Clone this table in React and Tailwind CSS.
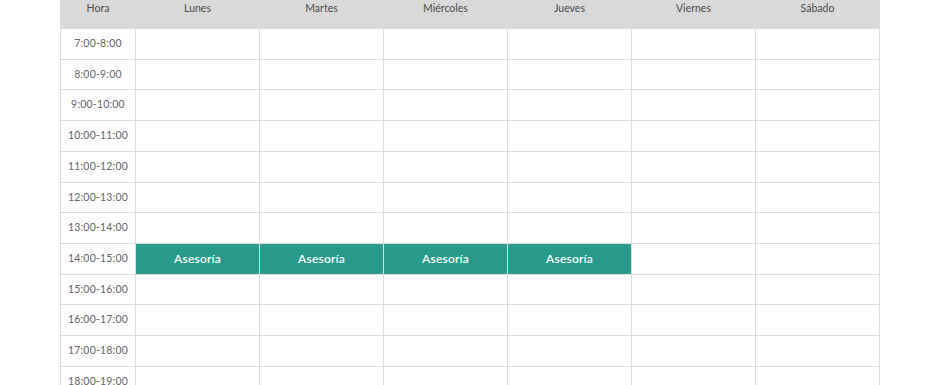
import React from "react";

const days = ["Lunes", "Martes", "Miércoles", "Jueves", "Viernes", "Sábado"];
const hours = [];
for (let h = 7; h <= 20; h++) hours.push(`${h}:00-${h + 1}:00`);

export default function App() {
  return (
    <div className="w-[945px] h-[385px] overflow-hidden bg-white" style={{ fontFamily: "Lato, 'Open Sans', sans-serif" }}>
      <div className="ml-[60px] w-[820px] grid grid-cols-[74px_repeat(6,123px)] grid-rows-[28px] auto-rows-[29.73px] gap-px bg-[#dcdcdc] px-px pb-px">
        <div className="bg-[#d9d9d9] flex items-center justify-center text-[10.5px] text-[#4a4a4a] pb-[10px]">Hora</div>
        {days.map((d) => (
          <div key={d} className="bg-[#d9d9d9] flex items-center justify-center text-[10.5px] text-[#4a4a4a] pb-[10px]">
            {d}
          </div>
        ))}
        {hours.map((t) => (
          <React.Fragment key={t}>
            <div className="bg-white flex items-center justify-center text-[10.5px] tracking-[0.2px] text-[#666]">{t}</div>
            {days.map((d, i) =>
              t === "14:00-15:00" && i < 4 ? (
                <div key={d} className="bg-[#279a8a] flex items-center justify-center text-[12px] font-semibold tracking-[0.2px] text-white">
                  Asesoría
                </div>
              ) : (
                <div key={d} className="bg-white" />
              )
            )}
          </React.Fragment>
        ))}
      </div>
    </div>
  );
}
